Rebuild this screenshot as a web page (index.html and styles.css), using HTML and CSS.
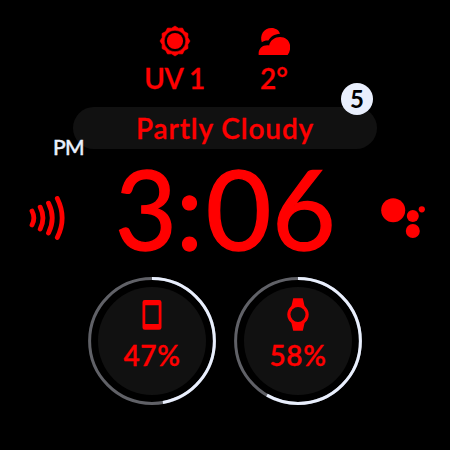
FILE: index.html
```html
<!DOCTYPE html>
<html lang="en">
<head>
<meta charset="utf-8">
<title>Watch face</title>
<link rel="stylesheet" href="styles.css">
</head>
<body>
<main class="face">
  <section class="weather">
    <div class="complication">
      <svg class="icon" width="32" height="32" viewBox="-16 -16 32 32">
        <circle r="8.1" fill="currentColor"/>
        <path fill="currentColor" stroke="currentColor" stroke-width=".6" stroke-linejoin="round" fill-rule="evenodd" d="M0-15 3.500-12.800 7.500-13 9.400-9.400 13-7.500 12.800-3.500 15 0 12.800 3.500 13 7.500 9.400 9.400 7.500 13 3.500 12.800 0 15-3.500 12.800-7.500 13-9.400 9.400-13 7.500-12.800 3.500-15 0-12.800-3.500-13-7.500-9.400-9.400-7.500-13-3.500-12.800ZM0-10.800A10.800 10.800 0 1 0 0 10.800 10.800 10.800 0 1 0 0-10.800Z"/>
      </svg>
      <span class="label uv">UV 1</span>
    </div>
    <div class="complication">
      <svg class="icon" width="32" height="32" viewBox="0 0 32 32">
        <path fill="currentColor" d="M3.800 17.300C1.500 10.500 5.500 3 13.500 3c4.300 0 7.400 2.200 8.500 5.700-5.700.3-9.500 2.800-11.600 6.900-2.500-.2-4.600.3-6.600 1.700Z"/>
        <path fill="currentColor" d="M.7 30c-.8-6.500 4-10.500 10.400-9.600C12.500 15 17 12 22 12c6 0 10.200 4.300 10.200 10 0 3-.9 5.600-2.600 8Z"/>
      </svg>
      <span class="label temp">2°</span>
    </div>
  </section>

  <section class="condition">
    <span class="condition-text">Partly Cloudy</span>
    <span class="badge">5</span>
    <span class="meridiem">PM</span>
  </section>

  <section class="middle">
    <svg class="tap" width="40" height="46" viewBox="0 0 40 46" fill="none" stroke="currentColor" stroke-width="4.800" stroke-linecap="round">
      <path d="M5 16Q8.700 23 5 30"/>
      <path d="M13.200 12.200Q18.700 23 13.200 34"/>
      <path d="M21.500 8.200Q29 23 21.500 38"/>
      <path d="M30.300 3.500Q40 23 30.300 42.500"/>
    </svg>
    <div class="time"><span class="digit three">3</span><span class="colon">:</span><span class="digit zero">0</span><span class="digit six">6</span></div>
    <svg class="assistant" width="46" height="46" viewBox="0 0 46 46" fill="currentColor">
      <circle cx="13.200" cy="15.200" r="12"/>
      <circle cx="32.800" cy="21" r="6"/>
      <circle cx="41.800" cy="14.300" r="3.100"/>
      <circle cx="32.800" cy="36" r="7"/>
    </svg>
  </section>

  <section class="batteries">
    <div class="gauge">
      <svg class="ring" width="128" height="128" viewBox="-64 -64 128 128">
        <circle class="track" r="62.400"/>
        <circle class="value" r="62.400" pathLength="100" stroke-dasharray="47.200 100" transform="rotate(-90)"/>
        <circle class="disc" r="54"/>
      </svg>
      <div class="gauge-body">
        <svg class="icon" width="24" height="34" viewBox="0 0 24 34">
          <path fill="currentColor" fill-rule="evenodd" d="M4.800 2h14.400a2.300 2.300 0 0 1 2.300 2.300v25.100a2.300 2.300 0 0 1-2.300 2.300H4.800a2.300 2.300 0 0 1-2.300-2.300V4.300A2.300 2.300 0 0 1 4.800 2ZM5.300 7.200V26h13.400V7.200Z"/>
        </svg>
        <span class="label percent">47%</span>
      </div>
    </div>
    <div class="gauge">
      <svg class="ring" width="128" height="128" viewBox="-64 -64 128 128">
        <circle class="track" r="62.400"/>
        <circle class="value" r="62.400" pathLength="100" stroke-dasharray="58.300 100" transform="rotate(-90)"/>
        <circle class="disc" r="54"/>
      </svg>
      <div class="gauge-body">
        <svg class="icon" width="24" height="34" viewBox="0 0 24 34">
          <path fill="currentColor" d="M7.200.2h9.600l2 9H5.200ZM5.200 24h13.600l-2 8.800H7.200Z"/>
          <circle cx="12" cy="16.500" r="10.700" fill="currentColor"/>
          <circle class="disc" cx="12" cy="16.500" r="7.500"/>
        </svg>
        <span class="label percent">58%</span>
      </div>
    </div>
  </section>
</main>
</body>
</html>
```

FILE: styles.css
```css
* { box-sizing: border-box; }
body {
  margin: 0;
  background: #000;
  color: #f00;
  font-family: Lato, "Liberation Sans", sans-serif;
}
.face {
  width: 450px;
  height: 450px;
  padding-top: 25px;
  overflow: hidden;
}
svg { display: block; flex: none; }
.weather {
  display: flex;
  justify-content: center;
  gap: 18px;
  height: 82px;
  padding-right: 2px;
}
.complication {
  width: 81px;
  display: flex;
  flex-direction: column;
  align-items: center;
}
.label {
  font-size: 28px;
  font-weight: 600;
  line-height: 34px;
  white-space: nowrap;
  -webkit-text-stroke: 0.3px currentColor;
}
.uv, .temp { margin-top: 4px; }
.uv { letter-spacing: -0.4px; }
.temp { padding-left: 1px; }
.condition {
  position: relative;
  width: 304px;
  height: 42px;
  margin-left: 73px;
  border-radius: 21px;
  background: #111;
  display: flex;
  align-items: center;
  justify-content: center;
}
.condition-text {
  font-size: 28px;
  font-weight: 600;
  line-height: 34px;
  letter-spacing: 0.9px;
  white-space: nowrap;
  -webkit-text-stroke: 0.3px currentColor;
}
.badge {
  position: absolute;
  right: 4px;
  top: -24px;
  width: 32px;
  height: 32px;
  border-radius: 50%;
  background: #e9effd;
  color: #000;
  font-size: 24px;
  font-weight: 700;
  line-height: 32px;
  text-align: center;
}
.meridiem {
  position: absolute;
  left: -20px;
  top: 27px;
  color: #e9effd;
  font-size: 21px;
  font-weight: 500;
  line-height: 26px;
  letter-spacing: -0.6px;
  -webkit-text-stroke: 0.4px currentColor;
}
.middle {
  display: flex;
  align-items: center;
  justify-content: space-between;
  height: 128px;
  padding: 0 24px 0 27px;
}
.tap { margin-top: 10px; }
.assistant { margin-top: 10px; }
.time {
  display: flex;
  width: 228px;
  height: 100px;
  margin-top: -12px;
  margin-right: -8px;
  font-size: 110px;
  font-weight: 400;
  line-height: 100px;
  -webkit-text-stroke: 1.4px currentColor;
}
.digit { display: flex; justify-content: center; }
.three { width: 64px; transform: scaleX(0.97); }
.colon { display: flex; justify-content: center; width: 24px; }
.zero { width: 67px; margin-left: 3px; transform: scaleX(1.03); }
.six { width: 65px; }
.batteries {
  display: flex;
  gap: 18px;
  padding-left: 88px;
}
.gauge {
  display: grid;
  width: 128px;
  height: 128px;
}
.ring, .gauge-body { grid-area: 1 / 1; }
.track, .value { fill: none; stroke-width: 3; }
.track { stroke: #606167; }
.value { stroke: #e9effd; }
.disc { fill: #111; }
.gauge-body {
  display: flex;
  flex-direction: column;
  align-items: center;
  padding-top: 21px;
}
.percent { margin-top: 6px; letter-spacing: 0.6px; }
```
